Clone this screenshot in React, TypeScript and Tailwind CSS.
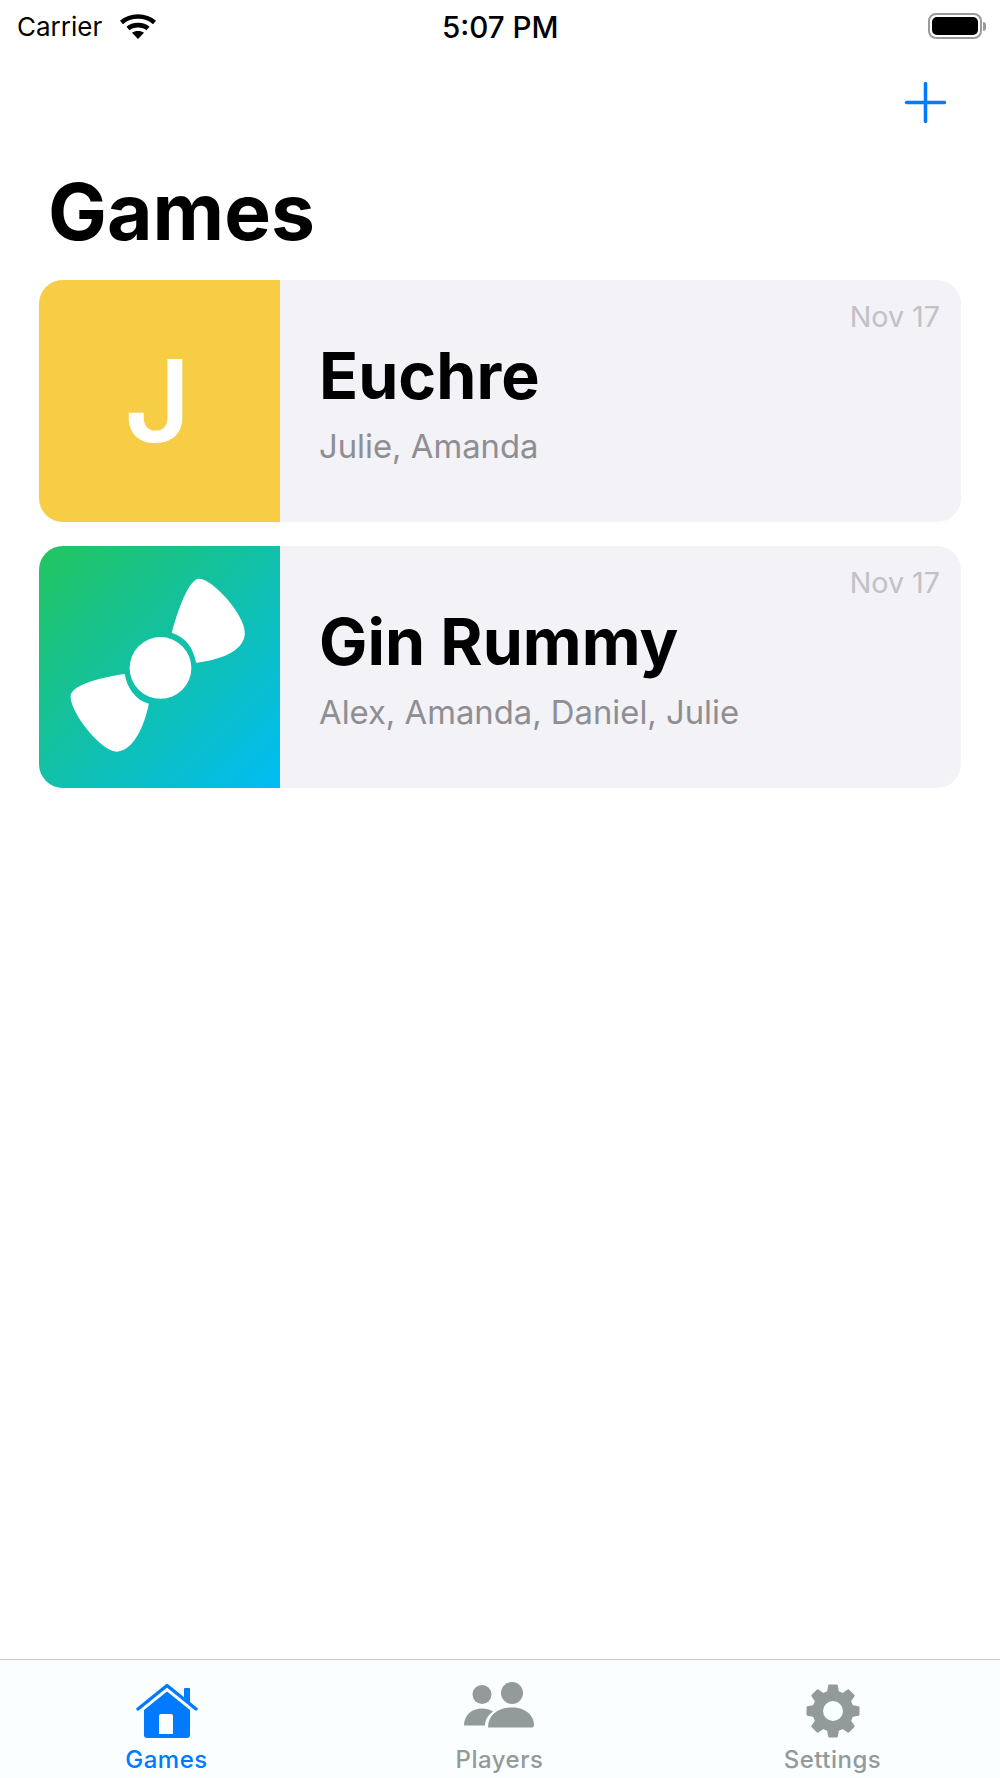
import { Plus } from 'lucide-react';

const games = [
  { name: 'Euchre', players: 'Julie, Amanda', date: 'Nov 17', icon: 'letter' },
  { name: 'Gin Rummy', players: 'Alex, Amanda, Daniel, Julie', date: 'Nov 17', icon: 'bow' },
];

// 8 tooth gear, built once from polar points
function gearPath(cx: number, cy: number, outer: number, inner: number) {
  const pts: string[] = [];
  for (let i = 0; i < 8; i++) {
    const a = (i * Math.PI) / 4 - Math.PI / 2;
    const step = Math.PI / 8;
    const p = (r: number, t: number) =>
      `${(cx + r * Math.cos(t)).toFixed(2)} ${(cy + r * Math.sin(t)).toFixed(2)}`;
    pts.push(`${i === 0 ? 'M' : 'L'}${p(inner, a - step * 0.62)}`);
    pts.push(`L${p(outer, a - step * 0.36)}`);
    pts.push(`L${p(outer, a + step * 0.36)}`);
    pts.push(`L${p(inner, a + step * 0.62)}`);
  }
  return pts.join(' ') + ' Z';
}

function BowIcon() {
  return (
    <svg viewBox="0 0 242 242" className="h-full w-full">
      <circle cx="122" cy="122" r="31" fill="#fff" />
      <path
        d="M133.3 86.7C140 62 151 32 161 32.500C175 33 208 70 206.7 88C205 106 180 114 157.7 116.7C155 102 147 91 133.3 86.7Z"
        fill="#fff"
      />
      <path
        d="M86 128C66 131 33 138 31.7 150C31 166 62 206 78.500 206C95 205 106 180 110.3 158C97 154 89 143 86 128Z"
        fill="#fff"
      />
    </svg>
  );
}

function HomeIcon() {
  return (
    <svg viewBox="0 0 62 56" className="h-[56px] w-[62px]">
      <path
        d="M2 26L31 2.500L60 26"
        fill="none"
        stroke="#007aff"
        strokeWidth="3.400"
        strokeLinecap="round"
        strokeLinejoin="round"
      />
      <path d="M48 6a1 1 0 0 1 1-1h4a1 1 0 0 1 1 1v13.500L48 15Z" fill="#007aff" />
      <path
        fillRule="evenodd"
        d="M31 8.500L54 27v25a3 3 0 0 1-3 3H11a3 3 0 0 1-3-3V27ZM25 31a2 2 0 0 0-2 2v18h14V33a2 2 0 0 0-2-2Z"
        fill="#007aff"
      />
    </svg>
  );
}

function PlayersIcon() {
  return (
    <svg viewBox="0 0 72 48" className="mb-[9px] mr-[2px] h-[48px] w-[72px]" fill="#929a9a">
      <circle cx="19" cy="12.500" r="9.500" />
      <path d="M1 43.500C1 33 9 26.500 19 26.500C23 26.500 27 27.500 30 29.500C25 33 22 38 22 43.500Z" />
      <circle cx="49" cy="11" r="11" />
      <path d="M25 45.500C25 33 35 25.500 49 25.500C62 25.500 71 33 71 43.500C71 44.600 70 45.500 69 45.500Z" />
    </svg>
  );
}

function GearIcon() {
  return (
    <svg viewBox="0 0 56 56" className="h-[56px] w-[56px]">
      <path
        fillRule="evenodd"
        d={gearPath(28, 28, 25.500, 19.500)}
        fill="#929a9a"
        stroke="#929a9a"
        strokeWidth="2.500"
        strokeLinejoin="round"
      />
      <circle cx="28" cy="28" r="10" fill="#fafeff" />
    </svg>
  );
}

function WifiIcon() {
  return (
    <svg viewBox="0 0 38 26" className="h-[26px] w-[38px]" fill="none" stroke="#000" strokeWidth="4.600">
      <path d="M2.500 9.500C11.500 1.500 26.500 1.500 35.500 9.500" />
      <path d="M9 15.500C14 11 24 11 29 15.500" />
      <path d="M19 26L13 19.800C16 17.300 22 17.300 25 19.800Z" fill="#000" stroke="none" />
    </svg>
  );
}

function GameRow({ game }: { game: (typeof games)[number] }) {
  return (
    <div className="relative flex h-[242px] overflow-hidden rounded-[24px] bg-[#f2f2f7]">
      {game.icon === 'letter' ? (
        <div className="flex w-[241px] shrink-0 items-center justify-center bg-[#f8cd46] pr-[4px] text-[114px] font-semibold leading-none text-white">
          J
        </div>
      ) : (
        <div className="w-[241px] shrink-0 bg-linear-to-br/srgb from-[#22c55e] to-[#00bcf5]">
          <BowIcon />
        </div>
      )}
      <div className="flex flex-col pl-[39px] pt-[57px]">
        <div className="text-[64.500px] font-bold leading-[78px] text-black">{game.name}</div>
        <div className="mt-[11px] text-[32.800px] leading-[40px] text-[#8e8e93]">{game.players}</div>
      </div>
      <div className="absolute right-[21px] top-[19px] text-[28.700px] leading-[36px] text-[#c1c1c6]">
        {game.date}
      </div>
    </div>
  );
}

function Tab({ label, active, children }: { label: string; active?: boolean; children: React.ReactNode }) {
  return (
    <div className="flex w-[333px] flex-col items-center">
      <div className="flex h-[60px] items-end justify-center">{children}</div>
      <div
        className={`mt-[6px] text-[24px] font-medium leading-[30px] tracking-[0.5px] ${
          active ? 'text-[#007aff]' : 'text-[#929a9a]'
        }`}
      >
        {label}
      </div>
    </div>
  );
}

export default function App() {
  return (
    <div className="flex h-[1778px] w-[1000px] flex-col overflow-hidden bg-white font-['Inter',sans-serif] text-black">
      {/* Status bar */}
      <div className="relative flex h-[52px] items-center justify-between pl-[17px] pr-[14px]">
        <div className="flex items-center gap-[17px]">
          <span className="pt-[2px] text-[26px] leading-[32px]">Carrier</span>
          <WifiIcon />
        </div>
        <span className="absolute left-[442px] top-[11px] text-[29.600px] font-medium leading-[32px]">5:07 PM</span>
        <div className="flex items-center">
          <div className="h-[26px] w-[54px] rounded-[8px] border-2 border-[#9a9a9a] p-[2px]">
            <div className="h-full w-full rounded-[5px] bg-black" />
          </div>
          <div className="ml-[1px] h-[9px] w-[3px] rounded-r-full bg-[#9a9a9a]" />
        </div>
      </div>

      {/* Nav bar */}
      <div className="flex justify-end pr-[42px] pt-[18px]">
        <Plus size={65} strokeWidth={1.3} className="text-[#007aff]" />
      </div>

      <h1 className="ml-[48px] mt-[33px] text-[78.500px] font-bold leading-[88px]">Games</h1>

      <div className="mx-[39px] mt-[24px] flex flex-col gap-[24px]">
        {games.map((game) => (
          <GameRow key={game.name} game={game} />
        ))}
      </div>

      <div className="flex-1" />

      {/* Tab bar */}
      <div className="flex h-[119px] border-t-[1.5px] border-[#c8cbcb] bg-[#fafeff] pt-[19px]">
        <Tab label="Games" active>
          <HomeIcon />
        </Tab>
        <Tab label="Players">
          <PlayersIcon />
        </Tab>
        <Tab label="Settings">
          <GearIcon />
        </Tab>
      </div>
    </div>
  );
}
